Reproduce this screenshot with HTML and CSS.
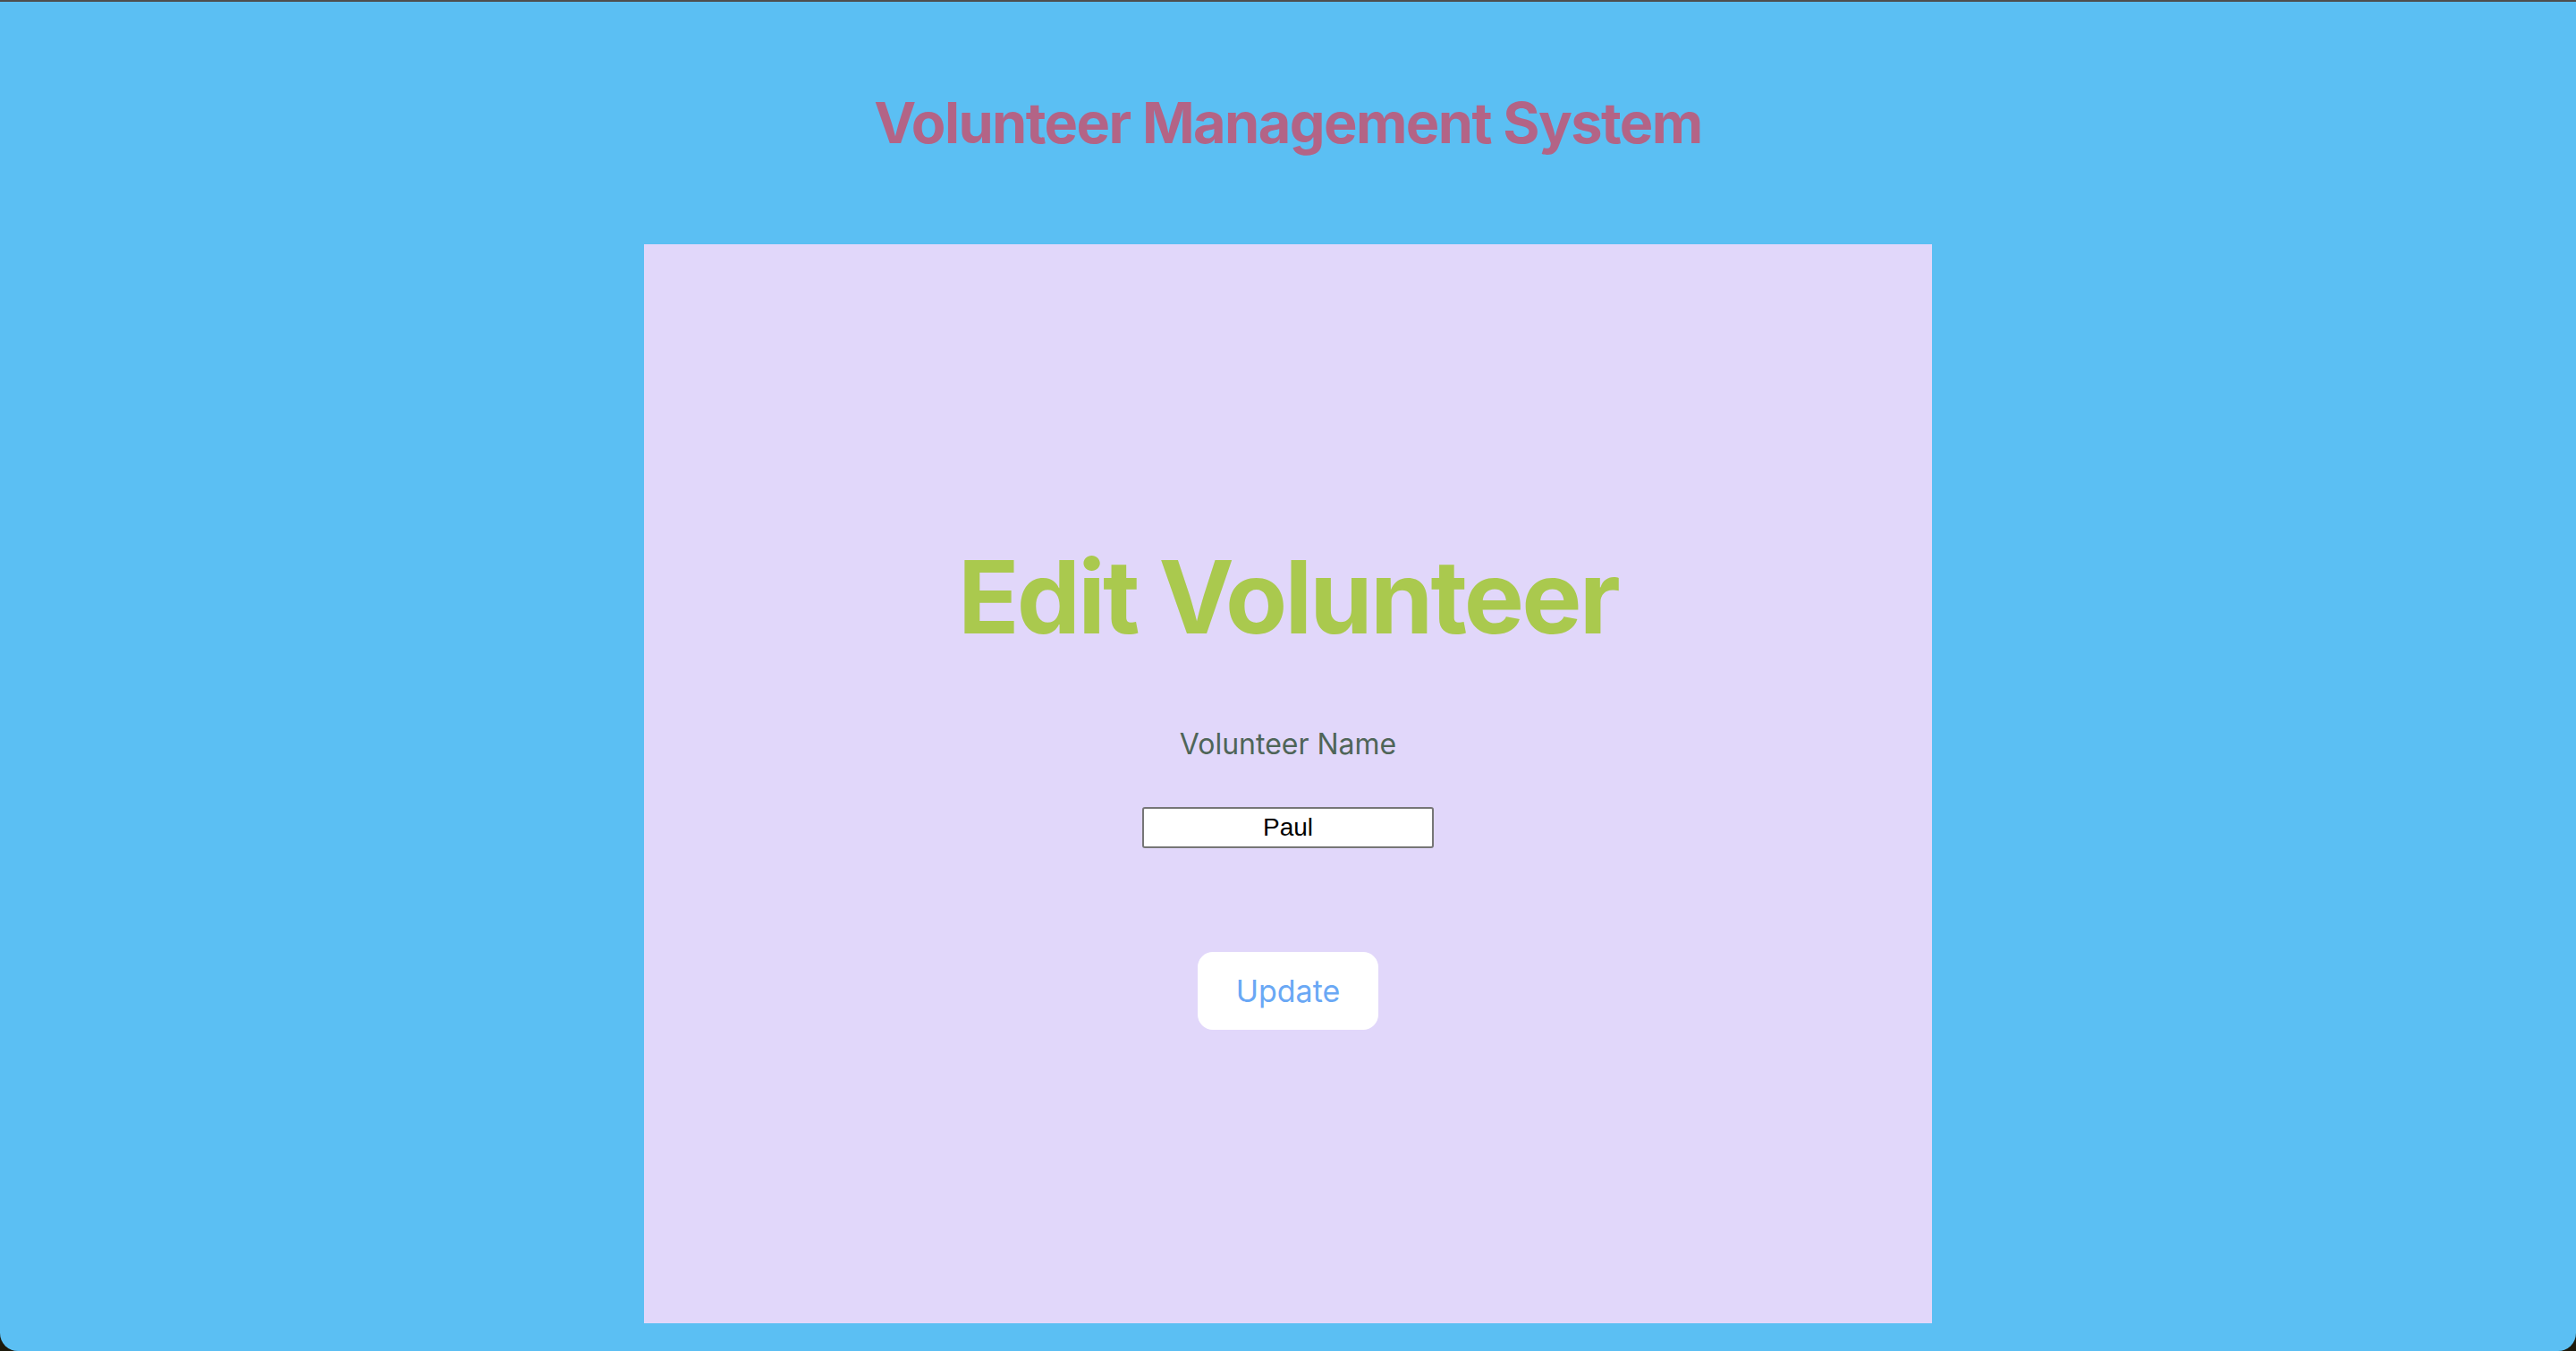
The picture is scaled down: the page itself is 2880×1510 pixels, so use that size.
FILE: index.html
```html
<!DOCTYPE html>
<html lang="en">
<head>
<meta charset="utf-8">
<title>Volunteer Management System</title>
<link rel="stylesheet" href="styles.css">
</head>
<body>
  <div class="page">
    <h1 class="site-title">Volunteer Management System</h1>
    <main class="card">
      <h2 class="card-title">Edit Volunteer</h2>
      <label class="field-label" for="name">Volunteer Name</label>
      <input class="field-input" id="name" type="text" value="Paul">
      <button class="update-btn" type="button">Update</button>
    </main>
  </div>
</body>
</html>
```
FILE: styles.css
```css
html, body {
  margin: 0;
  padding: 0;
}
body {
  background: #1d1a0c;
  width: 2880px;
  height: 1510px;
  overflow: hidden;
}
.page {
  box-sizing: border-box;
  height: 1510px;
  background: #5bbff3;
  border-top: 2px solid #4e4e4e;
  border-radius: 0 0 20px 20px;
  display: flex;
  flex-direction: column;
  align-items: center;
  font-family: "Inter", "Noto Sans", sans-serif;
}
.site-title {
  margin: 104px 0 0;
  font-size: 63px;
  line-height: 1;
  font-weight: 700;
  letter-spacing: -0.025em;
  color: #b36486;
}
.card {
  margin-top: 104px;
  width: 1440px;
  height: 1206px;
  background: #e1d7fa;
  display: flex;
  flex-direction: column;
  align-items: center;
  justify-content: center;
  padding-top: 10px;
  box-sizing: border-box;
}
.card-title {
  margin: 0;
  font-size: 113px;
  line-height: 1;
  font-weight: 700;
  letter-spacing: -0.025em;
  color: #aac94e;
}
.field-label {
  margin-top: 92px;
  font-size: 32px;
  line-height: 1;
  color: #4f6558;
}
.field-input {
  margin-top: 54px;
  box-sizing: border-box;
  width: 326px;
  height: 46px;
  border: 2px solid #767676;
  border-radius: 3px;
  background: #fff;
  text-align: center;
  font-family: "Liberation Sans", Arial, sans-serif;
  font-size: 28px;
  color: #000;
  padding: 0;
}
.update-btn {
  margin-top: 116px;
  width: 202px;
  height: 87px;
  border: none;
  border-radius: 17px;
  background: #fff;
  color: #6aa8f5;
  font-family: "Inter", "Noto Sans", sans-serif;
  font-size: 34px;
  line-height: 1;
  padding: 0;
}
```
